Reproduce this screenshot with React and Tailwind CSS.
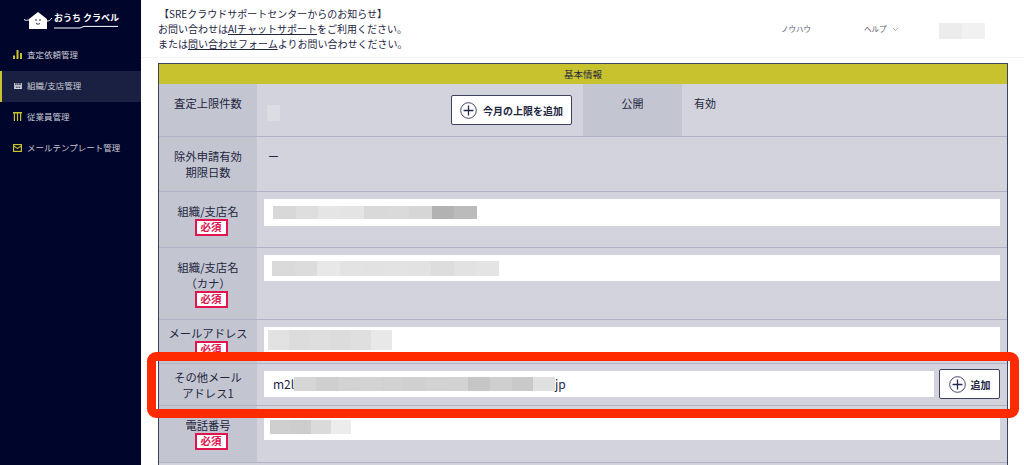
const font = { fontFamily: '"Noto Sans CJK JP", "Noto Sans", sans-serif' };

function Mosaic({ cells, h = "h-[13px]", cw = 23, className = "" }) {
  return (
    <div className={`flex ${h} ${className}`}>
      {cells.map((c, i) => (
        <div key={i} className="h-full shrink-0" style={{ width: cw, background: c }} />
      ))}
    </div>
  );
}

function Plus({ size = 17 }) {
  return (
    <svg width={size} height={size} viewBox="0 0 20 20" fill="none" stroke="#23284f" className="shrink-0">
      <circle cx="10" cy="10" r="9.2" strokeWidth="1" />
      <path d="M10 4.2v11.6M4.2 10h11.6" strokeWidth="1.5" />
    </svg>
  );
}

function Required() {
  return (
    <span className="ml-[6px] flex h-[17px] w-[33px] items-center justify-center border-2 border-[#e0144f] bg-white text-[10.5px] font-bold leading-none text-[#e0144f]">
      必須
    </span>
  );
}

function Label({ children, req, className = "" }) {
  return (
    <div className={`flex w-[98px] shrink-0 flex-col items-center bg-[#c3c5d1] text-center text-[11.3px] leading-[16px] text-[#23263f] ${className}`}>
      {children}
      {req && <Required />}
    </div>
  );
}

function Row({ className = "", children }) {
  return <div className={`flex border-b border-[#b1b2c6] ${className}`}>{children}</div>;
}

function NavItem({ icon, label, active }) {
  return (
    <div className={`flex h-[31px] items-center gap-[5px] pb-[2px] pl-[13px] text-[8.5px] text-[#c9cad3] ${active ? "border-l-2 border-[#c9c22f] bg-[#1a2041] !pl-[11px]" : ""}`}>
      <span className="flex w-[9px] justify-center">{icon}</span>
      <span className="whitespace-nowrap">{label}</span>
    </div>
  );
}

export default function App() {
  return (
    <div className="relative flex h-[465px] w-[1024px] overflow-hidden bg-white" style={font}>
      <aside className="flex w-[141px] shrink-0 flex-col bg-[#00052c]">
        <div className="flex h-[39px] items-start pl-[23px] pt-[10px]">
          <svg width="30" height="20" viewBox="0 0 30 20" className="shrink-0">
            <path d="M1 9.5c2 1.5 3 .5 5 .5M24 11c2 0 3-.5 5-3" stroke="#fff" strokeWidth="1" fill="none" />
            <path d="M6 9L15 2l9 7v10H6z" fill="#fff" />
            <circle cx="13" cy="10" r=".8" fill="#00052c" />
            <circle cx="17" cy="10" r=".8" fill="#00052c" />
            <path d="M13 13.5q2 1.5 4 0" stroke="#00052c" strokeWidth=".8" fill="none" />
          </svg>
          <div className="ml-[1px] mt-[1px] flex flex-col">
            <span className="whitespace-nowrap text-[9px] font-bold leading-[14px] text-white">おうち<span className="ml-[2px]">クラベル</span></span>
            <svg width="64" height="4" viewBox="0 0 64 4"><path d="M0 3h26l4-1.6h34" stroke="#fff" strokeWidth="1" fill="none" /></svg>
          </div>
        </div>
        <div className="mt-[1px] flex flex-col">
          <NavItem label="査定依頼管理" icon={<svg width="9" height="9" viewBox="0 0 9 9" fill="#c9c22f"><path d="M0 5.5h2V9H0zM3.5 0h2v9h-2zM7 3h2v6H7z" /></svg>} />
          <NavItem active label="組織/支店管理" icon={<svg width="8" height="6" viewBox="0 0 9 7" fill="#d6d7de"><path d="M0 0h1.4v2.5h1.3V0h1v2.5H5V0h1v2.5h1.5V0H9v7H0z" /><path d="M2 4.2h1v1.6H2zM4 4.2h1v1.6H4zM6 4.2h1v1.6H6z" fill="#1a2041" /></svg>} />
          <NavItem label="従業員管理" icon={<svg width="9" height="9" viewBox="0 0 9 9" fill="#c9c22f"><path d="M0 0h9v1.4H8.2V9H7V1.4H5.1V9H3.9V1.4H2V9H.8V1.4H0z" /></svg>} />
          <NavItem label="メールテンプレート管理" icon={<svg width="9" height="8" viewBox="0 0 9 8" fill="none" stroke="#c9c22f" strokeWidth="1.2"><rect x=".6" y=".6" width="7.8" height="6.8" /><path d="M.6 2l3.9 2.4L8.4 2" /></svg>} />
        </div>
      </aside>

      <main className="flex min-w-0 flex-1 flex-col">
        <header className="flex h-[58px] shrink-0 items-start border-b border-[#f4f4f6] bg-white">
          <div className="ml-[17px] mt-[6px] w-[300px] text-[10px] leading-[15px] text-[#23263f]">
            <p className="whitespace-nowrap pl-[1px]">【SREクラウドサポートセンターからのお知らせ】</p>
            <p className="whitespace-nowrap">お問い合わせは<span className="underline">AIチャットサポート</span>をご利用ください。</p>
            <p className="whitespace-nowrap">または<span className="underline">問い合わせフォーム</span>よりお問い合わせください。</p>
          </div>
          <div className="ml-auto mr-[39px] mt-[22px] flex items-start text-[7.5px] leading-[14px] text-[#55586c]">
            <span className="w-[83px] whitespace-nowrap">ノウハウ</span>
            <span className="flex w-[75px] items-center gap-[5px] whitespace-nowrap">
              ヘルプ
              <svg width="7" height="5" viewBox="0 0 7 5" fill="none" stroke="#9a9cab" strokeWidth=".8"><path d="M1 1l2.5 2.5L6 1" /></svg>
            </span>
            <Mosaic className="mt-[1px]" cells={["#ececec", "#f1f1f1"]} cw={23} h="h-[16px]" />
          </div>
        </header>

        <section className="ml-[17px] mt-[5px] w-[850px] flex-1 border-x border-t border-[#3f4160] bg-[#d2d3dd]">
          <div className="flex h-[20px] items-center justify-center bg-[#c9c22f] text-[9.5px] text-[#23263f]">基本情報</div>
          <Row className="h-[53px]">
            <Label className="pt-[11px]">査定上限件数</Label>
            <div className="flex flex-1">
              <div className="flex w-[326px] items-start pr-[11px] pt-[11px]">
                <div className="ml-[10px] mt-[10px] h-[16px] w-[13px] bg-[#dcdce3]" />
                <button className="ml-auto flex h-[30px] w-[121px] shrink-0 items-center justify-center gap-[6px] rounded-[2px] border border-[#3f4160] bg-white text-[10px] font-bold text-[#23263f]">
                  <Plus />
                  今月の上限を追加
                </button>
              </div>
              <div className="flex w-[99px] justify-center bg-[#c3c5d1] pt-[11px] text-[11px] leading-[16px] text-[#23263f]">公開</div>
              <div className="pl-[12px] pt-[11px] text-[11px] leading-[16px] text-[#23263f]">有効</div>
            </div>
          </Row>
          <Row className="h-[55px]">
            <Label className="pt-[11px]">除外申請有効<br />期限日数</Label>
            <div className="pl-[11px] pt-[11px] text-[11px] leading-[16px] text-[#23263f]">ー</div>
          </Row>
          <Row className="h-[56px]">
            <Label className="pt-[11px]">組織/支店名<Required /></Label>
            <div className="flex-1 px-[7px] pt-[7px]">
              <div className="flex h-[27px] items-center bg-white pl-[9px]">
                <Mosaic cw={22.67} cells={["#d8d8d8", "#dedede", "#e5e5e5", "#e4e4e4", "#d9d9d9", "#dadada", "#d6d6d6", "#b2b2b2", "#bbbbbb"]} />
              </div>
            </div>
          </Row>
          <Row className="h-[72px]">
            <Label className="pt-[11px]">組織/支店名<br />（カナ）<Required /></Label>
            <div className="flex-1 px-[7px] pt-[7px]">
              <div className="flex h-[26px] items-center bg-white pl-[8px]">
                <Mosaic h="h-[15px]" cw={22.7} cells={["#dadada", "#dcdcdc", "#e8e8e8", "#e3e3e3", "#e2e2e2", "#e3e3e3", "#e2e2e2", "#dddddd", "#e2e2e2", "#e4e4e4"]} />
              </div>
            </div>
          </Row>
          <Row className="h-[44px] overflow-hidden">
            <Label className="pt-[5px]">メールアドレス<Required /></Label>
            <div className="flex-1 px-[7px] pt-[7px]">
              <div className="flex h-[30px] items-start bg-white pl-[4px] pt-[3px]">
                <Mosaic h="h-[20px]" cw={20.7} cells={["#e2e2e2", "#dcdcdc", "#dedede", "#dcdcdc", "#dfdfdf", "#e8e8e8"]} />
              </div>
            </div>
          </Row>
          <Row className="h-[42px]">
            <Label className="pt-[5px]">その他メール<br />アドレス1</Label>
            <div className="flex flex-1 gap-[5px] px-[7px] pt-[7px]">
              <div className="flex h-[26px] flex-1 items-center bg-white pl-[9px] text-[12px] text-[#23263f]">
                <span className="w-[21px] shrink-0 overflow-hidden">m2l</span>
                <Mosaic cw={21.75} h="h-[14px]" cells={["#d6d6d6", "#cfcfcf", "#d3d3d3", "#d4d4d4", "#d2d2d2", "#d0d0d0", "#d3d3d3", "#d2d2d2", "#c6c6c6", "#cfcfcf", "#c9c9c9", "#e0e0e0"]} />
                jp
              </div>
              <button className="-mt-[2px] flex h-[30px] w-[61px] shrink-0 items-center justify-center gap-[5px] rounded-[2px] border border-[#3f4160] bg-white text-[10px] font-bold text-[#23263f]">
                <Plus />
                追加
              </button>
            </div>
          </Row>
          <Row className="h-[57px]">
            <Label className="pt-[11px]">電話番号<Required /></Label>
            <div className="flex-1 px-[7px] pt-[7px]">
              <div className="flex h-[27px] items-center bg-white pl-[6px]">
                <Mosaic cw={20.25} h="h-[14px]" cells={["#cfcfcf", "#cdcdcd", "#dadada", "#ececec"]} />
              </div>
            </div>
          </Row>
        </section>
      </main>

      <div className="pointer-events-none absolute left-[147px] top-[352px] h-[66px] w-[872px] rounded-[9px] border-[9px] border-[#ff2a00]" />
    </div>
  );
}
